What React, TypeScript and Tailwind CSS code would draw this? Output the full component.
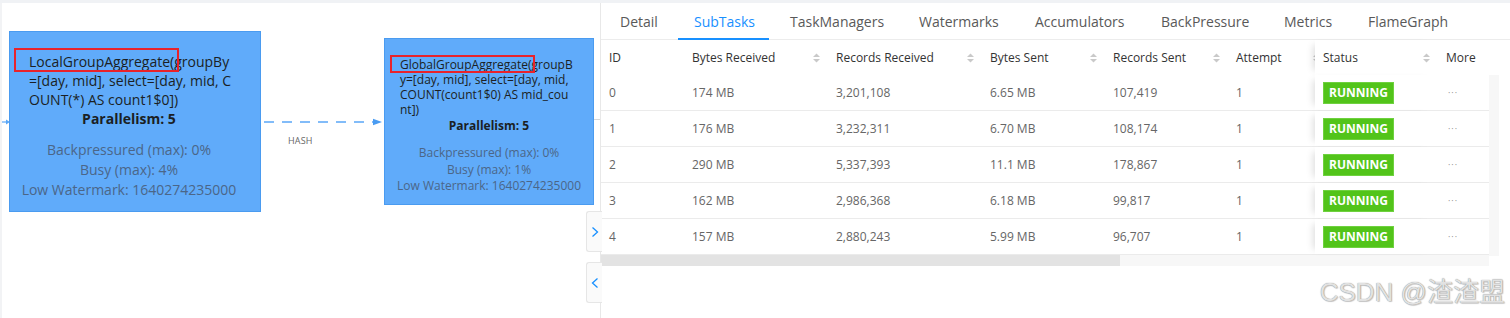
import React from 'react';

const tabs = [
    { label: 'Detail', w: 'w-[74px]' },
    { label: 'SubTasks', w: 'w-[96px]', active: true },
    { label: 'TaskManagers', w: 'w-[129px]' },
    { label: 'Watermarks', w: 'w-[116px]' },
    { label: 'Accumulators', w: 'w-[126px]' },
    { label: 'BackPressure', w: 'w-[123px]' },
    { label: 'Metrics', w: 'w-[84px]' },
    { label: 'FlameGraph', w: 'w-[120px]' },
];

const rows = [
    ['0', '174 MB', '3,201,108', '6.65 MB', '107,419', '1'],
    ['1', '176 MB', '3,232,311', '6.70 MB', '108,174', '1'],
    ['2', '290 MB', '5,337,393', '11.1 MB', '178,867', '1'],
    ['3', '162 MB', '2,986,368', '6.18 MB', '99,817', '1'],
    ['4', '157 MB', '2,880,243', '5.99 MB', '96,707', '1'],
];

const SortIcon: React.FC = () => (
    <svg width="7" height="10" viewBox="0 0 7 10" className="shrink-0">
        <polygon points="0,4 3.5,0.5 7,4" fill="#c9c9c9" />
        <polygon points="0,6 3.5,9.5 7,6" fill="#c9c9c9" />
    </svg>
);

const HeadCell: React.FC<{ text: string; sort?: boolean; clip?: boolean }> = ({ text, sort, clip }) => (
    <div className={`flex items-center justify-between pl-2 ${clip ? 'pr-0 overflow-hidden' : 'pr-[8px]'} text-[#333]`}>
        <span>{text}</span>
        {sort && <span className={clip ? '-mr-[5px]' : ''}><SortIcon /></span>}
    </div>
);

const FixedShadow = 'bg-white shadow-[-7px_0_7px_-5px_rgba(0,0,0,0.13)] relative z-10';

const App: React.FC = () => {
    return (
        <div className="relative w-[1510px] h-[318px] bg-white flex flex-col overflow-hidden font-['Open_Sans','Noto_Sans',sans-serif]">
            <div className="h-[3px] bg-[#f0f2f5] shrink-0" />
            <div className="flex flex-1">
                {/* Job graph canvas */}
                <div className="relative w-[600px] border-l-2 border-[#f2f3f5] shrink-0">
                    {/* incoming edge */}
                    <svg width="8" height="6" viewBox="0 0 8 6" className="absolute left-0 top-[116px]">
                        <line x1="0" y1="3" x2="6" y2="3" stroke="#5aa7f7" strokeWidth="1.2" />
                        <polygon points="4,0.5 8,3 4,5.5" fill="#5aa7f7" />
                    </svg>

                    <div className="absolute left-[7px] top-[28px] w-[252px] h-[181px] bg-[#60abfa] border border-[#4a9bf0] pl-[19px] pr-3 pt-[20px] text-[14px] leading-[19px] text-[#1b1f24]">
                        <div>LocalGroupAggregate(groupBy</div>
                        <div>=[day, mid], select=[day, mid, C</div>
                        <div>OUNT(*) AS count1$0])</div>
                        <div className="-ml-[19px] text-center font-bold">Parallelism: 5</div>
                        <div className="-ml-[19px] mt-[12px] text-center leading-[20px] text-[#4b6688]">
                            <div>Backpressured (max): 0%</div>
                            <div>Busy (max): 4%</div>
                            <div>Low Watermark: 1640274235000</div>
                        </div>
                    </div>
                    <div className="absolute left-[12px] top-[45px] w-[165px] h-[24px] border-2 border-[#e8232b]" />

                    {/* HASH edge */}
                    <svg width="122" height="8" viewBox="0 0 122 8" className="absolute left-[259px] top-[115px]">
                        <line x1="3" y1="4" x2="114" y2="4" stroke="#5aa7f7" strokeWidth="1.3" strokeDasharray="10 8" />
                        <polygon points="112,0.8 121,4 112,7.2" fill="#4a9cf2" />
                    </svg>
                    <div className="absolute left-[286px] top-[131px] text-[9px] text-[#666] tracking-[0.2px]">HASH</div>

                    <div className="absolute left-[382px] top-[35px] w-[210px] h-[167px] bg-[#60abfa] border border-[#4a9bf0] pl-[15px] pt-[18px] text-[12px] leading-[15px] text-[#1b1f24]">
                        <div>GlobalGroupAggregate(groupB</div>
                        <div>y=[day, mid], select=[day, mid,</div>
                        <div>COUNT(count1$0) AS mid_cou</div>
                        <div>nt])</div>
                        <div className="-ml-[15px] mt-[1px] text-center font-bold leading-[16px]">Parallelism: 5</div>
                        <div className="-ml-[15px] mt-[11px] text-center leading-[16.5px] text-[#4b6688]">
                            <div>Backpressured (max): 0%</div>
                            <div>Busy (max): 1%</div>
                            <div>Low Watermark: 1640274235000</div>
                        </div>
                    </div>
                    <div className="absolute left-[388px] top-[52px] w-[145px] h-[18px] border-2 border-[#e8232b]" />
                    <div className="absolute left-[592px] top-[116px] w-[6px] h-px bg-[#d9d9d9]" />

                    {/* collapse toggles */}
                    <div className="absolute left-[584px] top-[208px] w-[16px] h-[41px] flex items-center justify-center bg-[#fafafa] border border-r-0 border-[#e6e6e6] rounded-l-[3px]">
                        <svg width="8" height="12" viewBox="0 0 8 12"><polyline points="1.5,1.5 6.5,6 1.5,10.5" fill="none" stroke="#1890ff" strokeWidth="1.3" /></svg>
                    </div>
                    <div className="absolute left-[584px] top-[259px] w-[16px] h-[41px] flex items-center justify-center bg-[#fafafa] border border-r-0 border-[#e6e6e6] rounded-l-[3px]">
                        <svg width="8" height="12" viewBox="0 0 8 12"><polyline points="6.5,1.5 1.5,6 6.5,10.5" fill="none" stroke="#1890ff" strokeWidth="1.3" /></svg>
                    </div>
                </div>

                {/* Detail panel */}
                <div className="flex-1 border-l border-[#e8e8e8] flex flex-col">
                    <div className="h-[37px] border-b border-[#ececec] flex pl-[3px] shrink-0">
                        {tabs.map(t => (
                            <div key={t.label} className={`${t.w} relative flex items-center pl-4 text-[14px] ${t.active ? 'text-[#1890ff]' : 'text-[#595959]'}`}>
                                {t.label}
                                {t.active && <div className="absolute left-0 bottom-[-1px] w-[91px] h-[2px] bg-[#1890ff]" />}
                            </div>
                        ))}
                    </div>

                    <div className="flex">
                        <div className="w-[888px] text-[12px]">
                            <div className="grid grid-cols-[83px_144px_154px_123px_123px_87px_123px_51px] h-[35px]">
                                <HeadCell text="ID" />
                                <HeadCell text="Bytes Received" sort />
                                <HeadCell text="Records Received" sort />
                                <HeadCell text="Bytes Sent" sort />
                                <HeadCell text="Records Sent" sort />
                                <HeadCell text="Attempt" sort clip />
                                <div className={`flex items-center justify-between pl-2 pr-[8px] text-[#333] ${FixedShadow}`}>
                                    <span>Status</span>
                                    <SortIcon />
                                </div>
                                <div className="flex items-center pl-2 text-[#333] bg-white">More</div>
                            </div>
                            {rows.map(r => (
                                <div key={r[0]} className="grid grid-cols-[83px_144px_154px_123px_123px_87px_123px_51px] h-[36px] border-b border-[#ebebeb] text-[#666]">
                                    {r.map((c, i) => (
                                        <div key={i} className="flex items-center pl-2">{c}</div>
                                    ))}
                                    <div className={`flex items-center pl-2 ${FixedShadow}`}>
                                        <span className="h-[22px] px-[5px] flex items-center bg-[#52c41a] border border-[#6fd13f] text-white font-bold text-[12px]">RUNNING</span>
                                    </div>
                                    <div className="flex items-center pl-[10px] text-[9px] tracking-[1px] text-[#8c8c8c] bg-white">···</div>
                                </div>
                            ))}
                            <div className="h-[11px] bg-[#f7f7f7] flex">
                                <div className="w-[519px] bg-[#e3e3e3]" />
                            </div>
                        </div>
                        <div className="w-[10px] mt-[35px] h-[181px] bg-[#f7f7f7]" />
                    </div>
                </div>
            </div>

            <div className="absolute right-[5px] bottom-[13px] text-[26px] leading-none text-[#e2e2e2] font-['Liberation_Sans','Noto_Sans_CJK_SC',sans-serif] [text-shadow:0_0_1px_#777,1px_1px_1px_rgba(0,0,0,0.2)]">
                CSDN @渣渣盟
            </div>
        </div>
    );
};

export default App;
